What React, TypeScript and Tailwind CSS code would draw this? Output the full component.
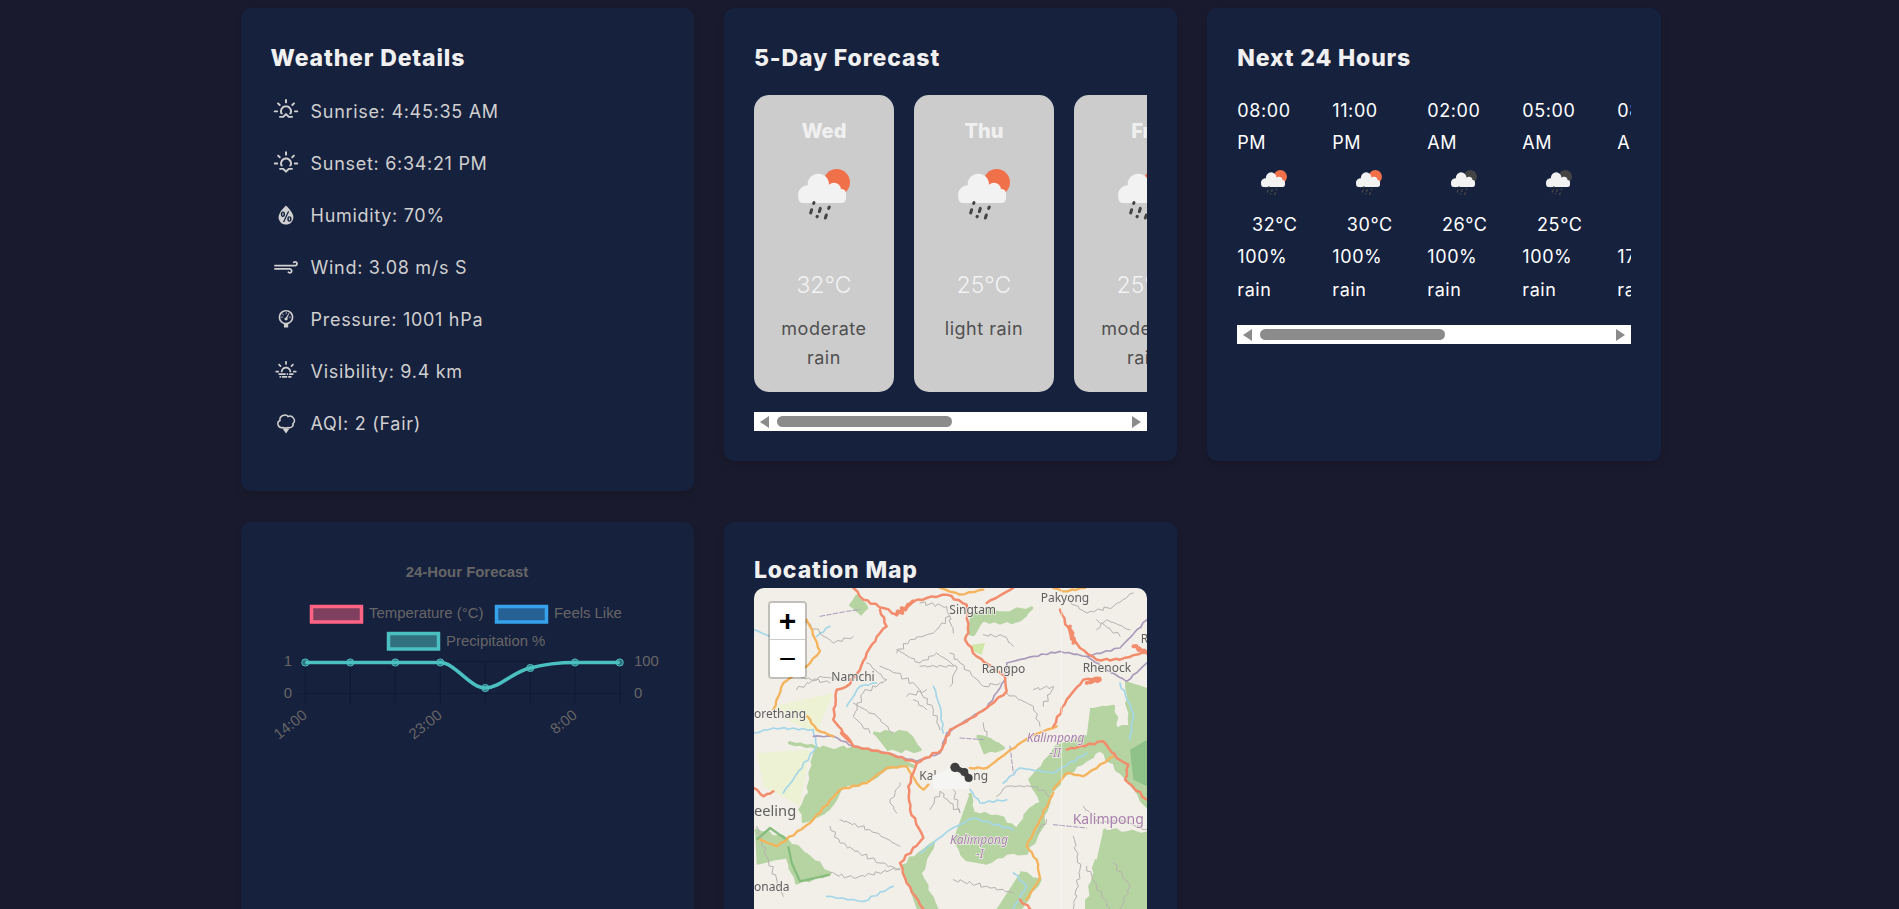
import { WiBarometer, WiDayHaze, WiHumidity, WiStrongWind, WiSunrise, WiSunset } from "react-icons/wi";
import type { ReactNode } from "react";

function AqiIcon() {
  return (
    <svg viewBox="0 0 30 30" className="h-[30px] w-[30px]">
      <path
        d="M12,19.5 C7,20.5 5,14.5 9,12.5 C8,7.5 15,5.5 17,8.5 C21,6.5 26,12.5 22,15.5 C23,18.5 19,20.5 17,19.5 C15,20.5 14,20.5 12,19.5Z"
        fill="none"
        stroke="currentColor"
        strokeWidth="1.5"
      />
      <path d="M11.5,20.5 H18.5 L15,25.5 Z" fill="currentColor" />
    </svg>
  );
}

const details = [
  { icon: <WiSunrise />, text: "Sunrise: 4:45:35 AM" },
  { icon: <WiSunset />, text: "Sunset: 6:34:21 PM" },
  { icon: <WiHumidity />, text: "Humidity: 70%" },
  { icon: <WiStrongWind />, text: "Wind: 3.08 m/s S" },
  { icon: <WiBarometer />, text: "Pressure: 1001 hPa" },
  { icon: <WiDayHaze />, text: "Visibility: 9.4 km" },
  { icon: <AqiIcon />, text: "AQI: 2 (Fair)" },
];

const days = [
  { day: "Wed", temp: "32°C", desc: "moderate rain" },
  { day: "Thu", temp: "25°C", desc: "light rain" },
  { day: "Fri", temp: "25°C", desc: "moderate rain" },
];

const hours = [
  { time: "08:00", half: "PM", temp: "32°C", pop: "100%", night: false },
  { time: "11:00", half: "PM", temp: "30°C", pop: "100%", night: false },
  { time: "02:00", half: "AM", temp: "26°C", pop: "100%", night: true },
  { time: "05:00", half: "AM", temp: "25°C", pop: "100%", night: true },
  { time: "08:00", half: "AM", temp: "26°C", pop: "17%", night: false },
];

function RainIcon({ night, className }: { night?: boolean; className: string }) {
  return (
    <svg viewBox="0 0 330 180" className={className}>
      <circle cx="200" cy="46" r="40" fill={night ? "#444444" : "#f0704a"} />
      <g fill="#f2f2f2">
        <circle cx="145" cy="52" r="32" />
        <circle cx="112" cy="82" r="27" />
        <circle cx="192" cy="68" r="21" />
        <rect x="85" y="66" width="143" height="42" rx="14" />
      </g>
      <g stroke="#444444" strokeWidth="9" strokeLinecap="round">
        <path d="M132,107 L131,109" />
        <path d="M125,128 L122,138" />
        <path d="M151,124 L148,134" />
        <path d="M178,120 L176,124" />
        <path d="M142,148 L141,149" />
        <path d="M169,144 L166,153" />
      </g>
    </svg>
  );
}

function FakeScrollbar({ thumb }: { thumb: string }) {
  return (
    <div className="flex h-[19px] items-center bg-white px-[6px]">
      <svg viewBox="0 0 9 12" className="h-[12px] w-[9px] shrink-0">
        <polygon points="9,0 9,12 0,6" fill="#8b8b8b" />
      </svg>
      <div className={`ml-[8px] h-[11px] rounded-full bg-[#8b8b8b] ${thumb}`} />
      <svg viewBox="0 0 9 12" className="ml-auto h-[12px] w-[9px] shrink-0">
        <polygon points="0,0 9,6 0,12" fill="#8b8b8b" />
      </svg>
    </div>
  );
}

function Card({ children, className }: { children: ReactNode; className: string }) {
  return <div className={`rounded-[10px] bg-[#16213e] p-[30px] shadow-[0_4px_6px_rgba(0,0,0,0.1)] ${className}`}>{children}</div>;
}

function Title({ children, className }: { children: ReactNode; className: string }) {
  return <h2 className={`text-[23px] font-extrabold leading-[36px] tracking-[0.85px] text-[#f0f0f0] ${className}`}>{children}</h2>;
}

function Chart() {
  const xs = [305.3, 350.3, 395.3, 440.3, 485.3, 530.3, 575, 619.7];
  const ys = [662.5, 662.5, 662.5, 662.5, 688, 668, 662.5, 662.5];
  const label = "font-['Liberation_Sans',sans-serif] text-[14.9px]";
  return (
    <svg viewBox="271 552 393 200" className="block h-[200px] w-[393px]">
      <text x="467" y="577" textAnchor="middle" fill="#666666" className={`${label} font-bold`}>24-Hour Forecast</text>

      <rect x="311.5" y="606.5" width="50" height="15.5" fill="#ff6384" fillOpacity="0.45" stroke="#ff6384" strokeWidth="3.5" />
      <text x="369" y="618" fill="#666666" className={label}>Temperature (°C)</text>
      <rect x="496.5" y="606.5" width="50" height="15.5" fill="#36a2eb" fillOpacity="0.5" stroke="#36a2eb" strokeWidth="3.5" />
      <text x="554" y="618" fill="#666666" className={label}>Feels Like</text>
      <rect x="388.5" y="633.5" width="50" height="15.5" fill="#4bc0c0" fillOpacity="0.5" stroke="#4bc0c0" strokeWidth="3.5" />
      <text x="446" y="646" fill="#666666" className={label}>Precipitation %</text>

      <g stroke="#111a34" strokeWidth="1">
        <path d="M298,661.5 H620 M298,693.5 H626" />
        {xs.map((x) => (
          <path key={x} d={`M${x},661 V703`} />
        ))}
      </g>

      <g fill="#666666" className={label}>
        <text x="288" y="666" textAnchor="middle">1</text>
        <text x="288" y="698" textAnchor="middle">0</text>
        <text x="634" y="666">100</text>
        <text x="634" y="698">0</text>
        <text transform="translate(308,717) rotate(-38)" textAnchor="end">14:00</text>
        <text transform="translate(443,717) rotate(-38)" textAnchor="end">23:00</text>
        <text transform="translate(578,717) rotate(-38)" textAnchor="end">8:00</text>
      </g>

      <path
        d="M305.3,662.5 L440.3,662.5 C455,662.5 470,688 485.3,688 C500,688 512,672 530.3,668 C545,664 560,662.5 575,662.5 L619.7,662.5"
        fill="none"
        stroke="#4bc0c0"
        strokeWidth="3.6"
      />
      {xs.map((x, i) => (
        <circle key={x} cx={x} cy={ys[i]} r="3.6" fill="#4bc0c0" fillOpacity="0.5" stroke="#4bc0c0" strokeWidth="1" />
      ))}
    </svg>
  );
}

// breaks straight segments into small jitter so the roads read like a real map
function wiggle(d: string, amp: number, step = 16) {
  return d
    .split("M")
    .filter(Boolean)
    .map((sub, k) => {
      const n = (sub.match(/-?[\d.]+/g) ?? []).map(Number);
      let out = `M${n[0]},${n[1]}`;
      for (let i = 2; i + 1 < n.length; i += 2) {
        const [x0, y0, x1, y1] = [n[i - 2], n[i - 1], n[i], n[i + 1]];
        const parts = Math.max(1, Math.ceil(Math.hypot(x1 - x0, y1 - y0) / step));
        for (let j = 1; j <= parts; j++) {
          const t = j / parts;
          const a = j < parts ? Math.sin(j * 2.4 + i * 1.7 + k + x0 * 0.13) * amp : 0;
          const b = j < parts ? Math.cos(j * 3.1 + i * 0.9 + k + y0 * 0.17) * amp : 0;
          out += ` L${(x0 + (x1 - x0) * t + a).toFixed(1)},${(y0 + (y1 - y0) * t + b).toFixed(1)}`;
        }
      }
      return out;
    })
    .join(" ");
}

const greens = [
  "M205,668 L260,680 L330,690 L400,685 L460,695 L540,720 L580,740 L540,738 L500,745 L470,770 L420,790 L370,800 L340,850 L310,880 L270,900 L250,905 L240,870 L270,820 L270,760 L290,685",
  "M390,260 L410,230 L440,265 L420,285",
  "M750,290 L790,270 L850,280 L935,265 L900,300 L840,310 L790,300 L760,345 L745,340",
  "M1110,570 L1180,560 L1190,630 L1230,620 L1220,490 L1281,510 L1281,860 L1230,790 L1140,690 L1100,720 L1040,760 L1000,810 L960,840 L930,780 L950,755 L1000,700 L1010,680 L1100,650",
  "M1150,930 L1220,940 L1281,940 L1281,1168 L1100,1168 L1130,1020",
  "M545,1040 L600,1000 L640,970 L600,1060 L650,1168 L590,1168",
  "M750,820 L760,880 L830,890 L890,930 L930,870 L990,830 L960,930 L920,1000 L860,1000 L800,1030 L740,1020 L700,960",
  "M900,1060 L960,1080 L900,1168 L830,1168",
  "M105,930 L200,960 L330,1060 L230,1090 L200,1010 L110,1030",
  "M460,640 L560,640 L600,690 L500,690",
  "M770,650 L810,660 L850,685 L790,700",
];

const water = [
  "M102,640 L160,625 L280,630 L290,680 L190,820",
  "M640,500 L660,560 L670,640",
  "M850,790 L900,745 L1000,760 L1100,700",
  "M750,810 L780,850 L860,840",
  "M600,1000 L690,930 L760,895 L880,930",
  "M320,1130 L430,1145 L520,1100",
  "M1200,490 L1240,580 L1230,660",
  "M102,330 L150,350 M290,350 L330,320",
  "M380,560 L420,500 L470,490",
  "M880,1060 L920,1100 L880,1168",
];

const grayRoads = [
  "M530,400 L570,360 L640,340 L690,290",
  "M480,440 L530,460 L590,500 L640,570 L660,630",
  "M690,400 L720,430 L790,500 L840,490",
  "M600,440 L700,440 M400,550 L470,590 L520,640 M580,540 L620,570",
  "M940,510 L1000,500 L970,560 M1130,300 L1200,350 M790,610 L800,650",
  "M830,830 L860,800 L950,800 L990,830 M630,870 L660,815 L690,850 L720,880 L700,810",
  "M360,900 L450,930 L540,980 M330,920 L360,970 L480,1030 L540,1050",
  "M330,1060 L400,1075 L540,1045 M1060,950 L1080,1050 L1060,1168",
  "M1180,1030 L1230,1100 L1200,1168 M110,920 L140,1010 L190,1130",
  "M980,900 L950,940 M540,790 L510,850 L530,880",
  "M790,345 L850,350 L880,380 M230,470 L330,490 M560,530 L620,510",
  "M440,430 L500,480 L430,520 L400,590 L450,640",
  "M530,390 L600,430 L650,400 L710,440 L690,500",
  "M600,250 L680,260 L700,340",
  "M1040,240 L1100,280 L1180,260 L1240,220",
  "M1130,330 L1160,300 L1230,330",
  "M860,520 L940,560 L960,620",
  "M250,300 L300,340 L340,370 L400,350",
  "M230,510 L300,470 L360,480",
  "M1090,860 L1140,910 L1200,900 L1281,930",
  "M1100,1040 L1130,1100 L1170,1168",
  "M700,1080 L800,1100 L880,1120",
];

const orangeRoads = [
  "M660,205 L720,225 L790,210",
  "M750,745 L800,745 L860,700 L930,650 L1010,620",
  "M160,570 L190,490 L260,440 L300,395 L270,320 L260,300",
  "M120,960 L170,980 L270,910 L360,810 L440,790 L500,745 L560,740 L590,790 L610,810 L625,795",
  "M1000,810 L1040,760 L1090,770 L1180,710",
  "M1000,820 L960,900 L920,980 L950,1020 L960,1075 L920,1140",
  "M262,590 L290,630 L340,650 M1000,205 L1030,215 L1095,205",
];

const redRoads = [
  "M400,205 L430,240 L490,265 L530,285 L580,245 L620,235 L680,225 L740,255 L745,340 L735,360 L770,410 L855,470 L860,515 L800,565 L740,605 L690,630 L665,690 L590,730 L500,700 L400,680 L380,650 L340,600 L350,510 L380,500 L420,450 L440,400 L480,340 L500,320 L480,270",
  "M590,730 L565,800 L570,870 L610,955 L540,1030 L560,1090 L610,1168",
  "M1020,270 L1050,340 L1080,385 L1130,420 L1200,420 L1281,395",
  "M1140,475 L1090,480 L1040,540 L1000,620",
  "M1040,690 L1150,665 L1190,715 L1225,735 L1215,780 L1281,840",
  "M102,805 L130,830 L160,815 M800,250 L880,205 M900,1140 L930,1168",
];

const mapLabel = "font-['Noto_Sans',sans-serif] text-[36px]";

function MapDrawing() {
  // coordinates follow a 3x crop of the reference, hence the large viewBox
  return (
    <svg viewBox="102 205 1179 963" className="block h-[321px] w-[393px] blur-[0.5px]">
      <rect x="102" y="205" width="1179" height="963" fill="#f2efe9" />
      <path d="M160,560 L340,520 L290,640 L200,600 Z M110,700 L270,690 L240,860 L130,800 Z" fill="#eef2d4" />
      <g fill="#b5d4a2" stroke="#b5d4a2" strokeWidth="10" strokeLinejoin="round">
        {greens.map((d) => (
          <path key={d} d={wiggle(d, 5, 22)} />
        ))}
      </g>
      <path d="M1230,690 L1281,660 L1281,800 L1240,780 Z" fill="#8fc288" />
      <path d="M755,375 L795,370 L785,405 L760,395 Z" fill="#cfe8a8" />
      <path d="M110,960 L150,925 L200,960 M205,980 L215,1030 L240,1085 L330,1065" fill="none" stroke="#86bd7d" strokeWidth="7" />

      <g fill="none" strokeLinejoin="round" strokeLinecap="round">
        <g stroke="#a3d6e8" strokeWidth="5">
          {water.map((d) => (
            <path key={d} d={wiggle(d, 2.5)} />
          ))}
        </g>
        <g stroke="#b5b2ad" strokeWidth="3">
          {grayRoads.map((d) => (
            <path key={d} d={wiggle(d, 5, 13)} />
          ))}
        </g>
        <path
          d={wiggle("M280,650 L340,650 L400,680 L500,700 L590,725 L660,700 L680,640 L740,600 L800,565 L855,480 L860,430 L940,410 L1020,395 L1100,410 L1160,450 L1220,485 L1281,430 M1100,410 L1200,385 L1281,300", 2)}
          stroke="#a99bb9"
          strokeWidth="5"
        />
        <path
          d="M720,655 L790,660 M300,290 L380,275 L420,270 M870,680 L880,760 M1000,915 L1100,925"
          stroke="#a99bb9"
          strokeWidth="3"
          strokeDasharray="14 6"
        />
        <g stroke="#f5b35c" strokeWidth="7">
          {orangeRoads.map((d) => (
            <path key={d} d={wiggle(d, 2)} />
          ))}
        </g>
        <g stroke="#f28c6c" strokeWidth="7.5">
          {redRoads.map((d) => (
            <path key={d} d={wiggle(d, 2.5)} />
          ))}
          <path d={wiggle("M530,285 L580,245 M1050,320 L1060,370 M365,640 L390,665 M1240,380 L1281,400 M1100,490 L1140,480", 5, 9)} strokeWidth="11" />
        </g>
      </g>
      <path d="M1025,205 V1168" stroke="#f8f6f2" strokeWidth="2" />

      <g fill="#5f5f5f" stroke="#f2efe9" strokeWidth="5" paintOrder="stroke" className={mapLabel}>
        <text x="962" y="248">Pakyong</text>
        <text x="688" y="284">Singtam</text>
        <text x="334" y="484">Namchi</text>
        <text x="785" y="461">Rangpo</text>
        <text x="1088" y="458">Rhenock</text>
        <text x="102" y="595">orethang</text>
        <text x="598" y="780">Kal</text>
        <text x="760" y="780">ng</text>
        <text x="1262" y="370">R</text>
        <text x="102" y="1114">onada</text>
        <text x="102" y="888" className="text-[44px]">eeling</text>
      </g>
      <g fill="#a880ad" stroke="#f2efe9" strokeWidth="4" paintOrder="stroke" className={mapLabel}>
        <text x="920" y="668" fontStyle="italic">Kalimpong</text>
        <text x="988" y="711" fontStyle="italic">-II</text>
        <text x="690" y="973" fontStyle="italic">Kalimpong</text>
        <text x="768" y="1016" fontStyle="italic">-I</text>
        <text x="1058" y="912" className="text-[42px]">Kalimpong</text>
      </g>

      <path d="M636,770 L690,745 L720,770 L748,790 L745,808 L640,808 Z" fill="#f5f5f3" />
      <g fill="#3f3f3f">
        <circle cx="705" cy="743" r="14" />
        <circle cx="733" cy="757" r="12" />
        <circle cx="746" cy="775" r="12" />
      </g>
      <path d="M705,743 L733,757 L746,775" fill="none" stroke="#3f3f3f" strokeWidth="16" />
    </svg>
  );
}

export default function App() {
  return (
    <div className="h-[909px] overflow-hidden bg-[#1a1a2e] font-['Inter',sans-serif]">
      <div className="ml-[240.6px] grid w-[1420px] grid-cols-3 items-start gap-x-[30px] gap-y-[31px] pt-[8px]">
        <Card className="pb-[32px]">
          <Title className="mb-[19px] pt-[2px]">Weather Details</Title>
          {details.map((d) => (
            <div key={d.text} className="mb-[20px] flex h-[32px] items-center text-[18px] tracking-[0.7px] text-[#d0d0d0]">
              <span className="flex w-[40px] shrink-0 items-center text-[30px]">{d.icon}</span>
              {d.text}
            </div>
          ))}
        </Card>

        <Card className="">
          <Title className="mb-[19px] pt-[2px]">5-Day Forecast</Title>
          <div className="flex gap-[20px] overflow-hidden">
            {days.map((d) => (
              <div key={d.day} className="h-[297px] w-[140px] shrink-0 rounded-[15px] bg-[#cccccc] px-[15px] pt-[20px] text-center">
                <div className="text-[20px] font-extrabold leading-[32px] text-[#f0f0f0]">{d.day}</div>
                <div className="-mx-[15px] flex h-[100px] translate-x-[1px] items-center justify-center">
                  <RainIcon className="h-[60px] w-[110px] shrink-0" />
                </div>
                <div className="mt-[17px] text-[23px] font-light leading-[43px] text-[#f2f2f2]">{d.temp}</div>
                <div className="mt-[7px] text-[18px] leading-[29px] tracking-[0.5px] text-[#505050]">{d.desc}</div>
              </div>
            ))}
          </div>
          <div className="mt-[20px]">
            <FakeScrollbar thumb="w-[175px]" />
          </div>
        </Card>

        <Card className="h-[453px]">
          <Title className="mb-[19px] pt-[2px]">Next 24 Hours</Title>
          <div className="flex gap-[20px] overflow-hidden">
            {hours.map((h) => (
              <div key={h.time + h.half} className="w-[75px] shrink-0 text-[18px] leading-[32.4px] tracking-[0.6px] text-white">
                <div>{h.time}</div>
                <div>{h.half}</div>
                <div className="flex h-[49px] items-center justify-center">
                  <RainIcon night={h.night} className="h-[30px] w-[55px] shrink-0" />
                </div>
                <div className="text-center">{h.temp}</div>
                <div>{h.pop}</div>
                <div>rain</div>
              </div>
            ))}
          </div>
          <div className="mt-[19px]">
            <FakeScrollbar thumb="w-[185px]" />
          </div>
        </Card>

        <Card className="h-[500px]">
          <Chart />
        </Card>

        <Card className="h-[500px]">
          <Title className="">Location Map</Title>
          <div className="relative h-[400px] w-[393px] overflow-hidden rounded-[10px]">
            <MapDrawing />
            <div className="absolute left-[14px] top-[13px] w-[39px] overflow-hidden rounded-[4px] border-2 border-[#00000033] bg-clip-padding font-['Liberation_Sans',sans-serif] text-black">
              <div className="flex h-[37px] items-center justify-center border-b border-[#cccccc] bg-white text-[30px] font-bold leading-none">+</div>
              <div className="flex h-[37px] items-center justify-center bg-white text-[30px] leading-none">−</div>
            </div>
          </div>
        </Card>
      </div>
    </div>
  );
}
